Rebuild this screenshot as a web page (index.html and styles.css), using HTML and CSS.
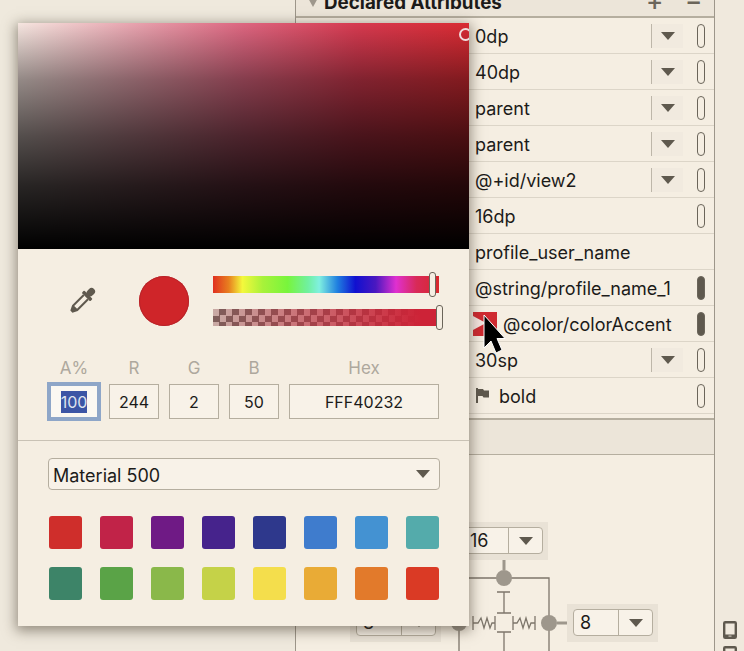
FILE: index.html
```html
<!DOCTYPE html>
<html lang="en">
    <head>
        <meta charset="UTF-8">
        <title>Color Picker</title>
        <link rel="stylesheet" href="styles.css">
    </head>
    <body>
        <div class="app">
            <div class="side-left"></div>
            <div class="panel">
                <div class="panel-head">
                    <span class="twist"></span>
                    <b>Declared Attributes</b>
                    <span class="head-btn head-plus">+</span>
                    <span class="head-btn head-minus">−</span>
                </div>
                <div class="row"><span class="val">0dp</span><span class="drop"><i></i></span><span class="pill"></span></div>
                <div class="row"><span class="val">40dp</span><span class="drop"><i></i></span><span class="pill"></span></div>
                <div class="row"><span class="val">parent</span><span class="drop"><i></i></span><span class="pill"></span></div>
                <div class="row"><span class="val">parent</span><span class="drop"><i></i></span><span class="pill"></span></div>
                <div class="row"><span class="val">@+id/view2</span><span class="drop"><i></i></span><span class="pill"></span></div>
                <div class="row"><span class="val">16dp</span><span class="pill"></span></div>
                <div class="row"><span class="val">profile_user_name</span></div>
                <div class="row"><span class="val">@string/profile_name_1</span><span class="pill on"></span></div>
                <div class="row"><span class="chip"></span><span class="val">@color/colorAccent</span><span class="pill on"></span></div>
                <div class="row"><span class="val">30sp</span><span class="drop"><i></i></span><span class="pill"></span></div>
                <div class="row">
                    <svg class="flag" width="13" height="15" viewBox="0 0 13 15"><path d="M0 0h2v15H0zM2 1h5l1 1.500h5v7H7.500L6.500 8H2z" fill="#5f594e"/></svg>
                    <span class="val">bold</span><span class="pill"></span>
                </div>
                <div class="band"></div>
                <div class="area">
                    <svg class="wires" width="418" height="196" viewBox="296 455 418 196">
                        <g fill="none" stroke="#7d766b" stroke-width="1.300">
                            <path d="M459 578H549V651M459 578V651"/>
                            <path d="M497 592H510M504 592V613M497 613H511M497 632H511M504 632V651"/>
                            <path d="M473 616V630M473 623H478L481 618L484 628L487 618L490 628L492 623H495M495 616V630"/>
                            <path d="M513 616V630M513 623H517L520 618L523 628L526 618L529 628L531 623H535M535 616V630"/>
                        </g>
                        <g stroke="#9e978c" stroke-width="3"><path d="M504 560V570M557 623H567"/></g>
                        <g fill="#9e978c"><circle cx="504" cy="578" r="8"/><circle cx="549" cy="623" r="8"/><circle cx="459" cy="623" r="8"/></g>
                    </svg>
                    <div class="mini mini-top"><div class="mini-box"><span class="mini-val">16</span><span class="mini-arrow"><i></i></span></div></div>
                    <div class="mini mini-left"><div class="mini-box"><span class="mini-val">8</span><span class="mini-arrow"><i></i></span></div></div>
                    <div class="mini mini-right"><div class="mini-box"><span class="mini-val">8</span><span class="mini-arrow"><i></i></span></div></div>
                </div>
            </div>
            <div class="side-right">
                <svg width="14" height="18" viewBox="0 0 14 18"><rect x="1.200" y="1.200" width="11.600" height="15.600" rx="1" fill="none" stroke="#5f594e" stroke-width="2.400"/><rect x="1" y="13.500" width="12" height="3.500" fill="#5f594e"/><rect x="5.500" y="14.600" width="3" height="1" fill="#e0d9cc"/></svg>
                <svg width="14" height="18" viewBox="0 0 14 18"><rect x="1.200" y="1.200" width="11.600" height="15.600" rx="1" fill="none" stroke="#5f594e" stroke-width="2.400"/></svg>
            </div>
        </div>

        <div class="picker">
            <div class="field-sat"><span class="sat-knob"></span></div>
            <div class="tools">
                <svg class="dropper" width="28" height="28" viewBox="0 0 28 28">
                    <g transform="rotate(45 14 14)" fill="#5f594e">
                        <rect x="10.500" y="-3" width="7" height="9" rx="3.500"/>
                        <rect x="8" y="5" width="12" height="3.500" rx="1"/>
                        <path d="M10 8.500h8V24l-2.500 5h-3L10 24zM12 8.500V23h4V8.500z" fill-rule="evenodd"/>
                    </g>
                </svg>
                <span class="preview"></span>
                <div class="bars">
                    <div class="bar bar-hue"><span class="thumb thumb-hue"></span></div>
                    <div class="bar bar-alpha"><span class="thumb thumb-alpha"></span></div>
                </div>
            </div>
            <div class="inputs">
                <label>A%</label><label>R</label><label>G</label><label>B</label><label>Hex</label>
                <div class="box focus"><span class="sel">100</span></div>
                <div class="box">244</div>
                <div class="box">2</div>
                <div class="box">50</div>
                <div class="box">FFF40232</div>
            </div>
            <div class="rule"></div>
            <div class="select"><span>Material 500</span><i></i></div>
            <div class="swatches">
                <span style="background:#cf2e2b"></span>
                <span style="background:#c12348"></span>
                <span style="background:#6f1a85"></span>
                <span style="background:#46238c"></span>
                <span style="background:#2e388c"></span>
                <span style="background:#3f7ccd"></span>
                <span style="background:#4492d2"></span>
                <span style="background:#54abab"></span>
                <span style="background:#3d8468"></span>
                <span style="background:#5aa347"></span>
                <span style="background:#8ab84a"></span>
                <span style="background:#c5d248"></span>
                <span style="background:#f4de4c"></span>
                <span style="background:#e9ab36"></span>
                <span style="background:#e27a2b"></span>
                <span style="background:#da3a25"></span>
            </div>
        </div>

        <svg class="cursor" width="26" height="42" viewBox="0 0 26 42">
            <path d="M1 1V34L8 27L13 39L19 36L14 24.500H22z" fill="#000" stroke="#fff" stroke-width="1"/>
        </svg>
    </body>
</html>
```

FILE: styles.css
```css
html, body {
    margin: 0;
    padding: 0;
    height: 100%;
    overflow: hidden;
}

body {
    position: relative;
    background-color: #f5eee2;
    color: #1c1b19;
    font-family: "Inter", "Liberation Sans", sans-serif;
    font-size: 18px;
}

.app {
    display: flex;
    height: 651px;
    overflow: hidden;
}

.side-left {
    width: 295px;
    background-color: #efe9dd;
}

.side-right {
    display: flex;
    flex: 1;
    flex-direction: column;
    align-items: center;
    justify-content: flex-end;
    gap: 7px;
    margin-bottom: -13px;
    background-color: #f0e9dd;
}

.panel {
    display: flex;
    flex-direction: column;
    width: 418px;
    margin-top: -9px;
    border-left: 1px solid #9d968a;
    border-right: 1px solid #9d968a;
    background-color: #f5eee2;
}

.panel-head {
    display: flex;
    flex: none;
    align-items: center;
    height: 27px;
    padding-left: 12px;
    padding-bottom: 3px;
    box-sizing: border-box;
    border-bottom: 2px solid #b5ae9f;
    background-color: #ece5d9;
    font-size: 18.800px;
}

.twist {
    width: 0;
    height: 0;
    margin-right: 6px;
    border-left: 5px solid transparent;
    border-right: 5px solid transparent;
    border-top: 9px solid #9e978c;
}

.head-btn {
    position: absolute;
    top: -15px;
    color: #6b655a;
    font-size: 26px;
    font-weight: 500;
}

.head-plus {
    left: 646px;
}

.head-minus {
    left: 685px;
}

.row {
    display: flex;
    flex: none;
    align-items: center;
    height: 36px;
    padding-left: 179px;
    box-sizing: border-box;
    border-bottom: 1px solid #dcd5c8;
}

.val {
    flex: 1;
    padding-top: 2px;
}

.chip {
    position: relative;
    width: 24px;
    height: 24px;
    margin-left: -2px;
    margin-right: 6px;
    background-color: #cf2a30;
}

.chip::after {
    content: "";
    position: absolute;
    left: 0;
    top: 4px;
    border-left: 13px solid #f5e6e0;
    border-top: 7px solid transparent;
    border-bottom: 7px solid transparent;
}

.flag {
    margin-left: 1px;
    margin-right: 10px;
}

.drop {
    display: flex;
    align-items: center;
    justify-content: center;
    width: 31px;
    height: 24px;
    margin-right: 14px;
    border-left: 1px solid #bdb6a9;
    background-color: #f1eadf;
}

.drop i,
.mini-arrow i,
.select i {
    width: 0;
    height: 0;
    border-left: 7px solid transparent;
    border-right: 7px solid transparent;
    border-top: 8px solid #5f594e;
}

.pill {
    width: 6px;
    height: 22px;
    margin-right: 9px;
    border: 1px solid #6b655a;
    border-radius: 4px;
}

.pill.on {
    background-color: #5f594e;
}

.band {
    flex: none;
    height: 34px;
    margin-top: 4px;
    border-top: 2px solid #b5ae9f;
    border-bottom: 1px solid #b5ae9f;
    background-color: #ece5d9;
}

.area {
    position: relative;
    flex: 1;
}

.wires {
    position: absolute;
    left: 0;
    top: 0;
}

.mini {
    position: absolute;
    padding: 5px 5px 6px 6px;
    background-color: #e9e2d6;
}

.mini-box {
    display: flex;
    width: 80px;
    height: 27px;
    box-sizing: border-box;
    border: 1px solid #b5ae9f;
    border-radius: 4px;
    background-color: #f8f2e8;
    font-size: 18px;
    line-height: 26px;
}

.mini-top {
    left: 161px;
    top: 67px;
}

.mini-left {
    left: 54px;
    top: 149px;
}

.mini-right {
    left: 271px;
    top: 149px;
}

.mini-val {
    flex: 1;
    padding-left: 6px;
}

.mini-arrow {
    display: flex;
    align-items: center;
    justify-content: center;
    width: 33px;
    border-left: 1px solid #b5ae9f;
}

.picker {
    position: absolute;
    left: 18px;
    top: 23px;
    width: 451px;
    height: 603px;
    background-color: #f5eee2;
    box-shadow: 0 3px 12px 2px rgba(60, 50, 35, 0.5);
}

.field-sat {
    position: relative;
    height: 226px;
    overflow: hidden;
    background:
        linear-gradient(to bottom, rgba(0, 0, 0, 0), rgba(0, 0, 0, 0.4) 25%, rgba(0, 0, 0, 0.66) 50%, rgba(0, 0, 0, 0.84) 72%, #000),
        linear-gradient(to right, #f6e6e0, #e8a5b0 25%, #dd6680 50%, #d63a50 75%, #d92b33);
}

.sat-knob {
    position: absolute;
    right: -3px;
    top: 5px;
    width: 9px;
    height: 9px;
    border: 2px solid #f0dcdc;
    border-radius: 50%;
}

.tools {
    display: flex;
    align-items: center;
    padding: 27px 0 25px 50px;
}

.dropper {
    margin-right: 43px;
}

.preview {
    width: 50px;
    height: 50px;
    margin-right: 24px;
    border-radius: 50%;
    background-color: #cf2529;
    box-shadow: inset 0 0 0 1px #b8242a;
}

.bars {
    display: flex;
    flex-direction: column;
    gap: 16px;
    width: 226px;
}

.bar {
    position: relative;
    height: 17px;
}

.bar-hue {
    background: linear-gradient(to right, #e03020 0%, #e8801f 7%, #f4f83c 13%, #a8f23a 22%, #78f53c 33%, #70f0a0 42%, #80f0e0 47%, #2080e0 55%, #1010d0 63%, #4a18c0 72%, #e030d0 81%, #d82a58 90%, #d8282c 100%);
}

.bar-alpha {
    background:
        linear-gradient(to right, rgba(205, 35, 55, 0.12), #cd2337 92%),
        repeating-conic-gradient(#72665f 0 25%, #c8bdb4 0 50%) 0 0 / 13px 13px;
}

.thumb {
    position: absolute;
    top: -4px;
    width: 5px;
    height: 23px;
    border: 1px solid #6b655a;
    border-radius: 3px;
    background-color: #f5eee2;
}

.thumb-hue {
    right: 3px;
}

.thumb-alpha {
    right: -4px;
}

.inputs {
    display: grid;
    grid-template-columns: 50px 50px 50px 50px 150px;
    grid-template-rows: 33px 35px;
    column-gap: 10px;
    padding-left: 31px;
    font-size: 16px;
}

.inputs label {
    padding-top: 1px;
    color: #aea89d;
    font-size: 17px;
    text-align: center;
    line-height: 33px;
}

.box {
    box-sizing: border-box;
    padding-top: 1px;
    border: 1px solid #b5ae9f;
    background-color: #f8f2e8;
    line-height: 33px;
    text-align: center;
}

.box.focus {
    border-color: #8ea6c8;
    background-color: #fbf8f2;
    box-shadow: 0 0 0 2px #8ea6c8, inset 0 0 0 1px #8ea6c8;
}

.sel {
    padding: 1px 0;
    background-color: #3c55a5;
    color: #dfe3ee;
}

.rule {
    height: 1px;
    margin-top: 21px;
    background-color: #c9c2b5;
}

.select {
    display: flex;
    align-items: center;
    justify-content: space-between;
    height: 32px;
    margin: 17px 29px 0 30px;
    padding: 0 9px 0 4px;
    box-sizing: border-box;
    border: 1px solid #b5ae9f;
    border-radius: 4px;
    background-color: #f8f2e8;
}

.select span {
    padding-top: 2px;
}

.swatches {
    display: grid;
    grid-template-columns: repeat(8, 33px);
    grid-auto-rows: 33px;
    gap: 18px;
    margin-top: 26px;
    padding-left: 31px;
}

.swatches span {
    border-radius: 3px;
}

.cursor {
    position: absolute;
    left: 483px;
    top: 314px;
}
```
